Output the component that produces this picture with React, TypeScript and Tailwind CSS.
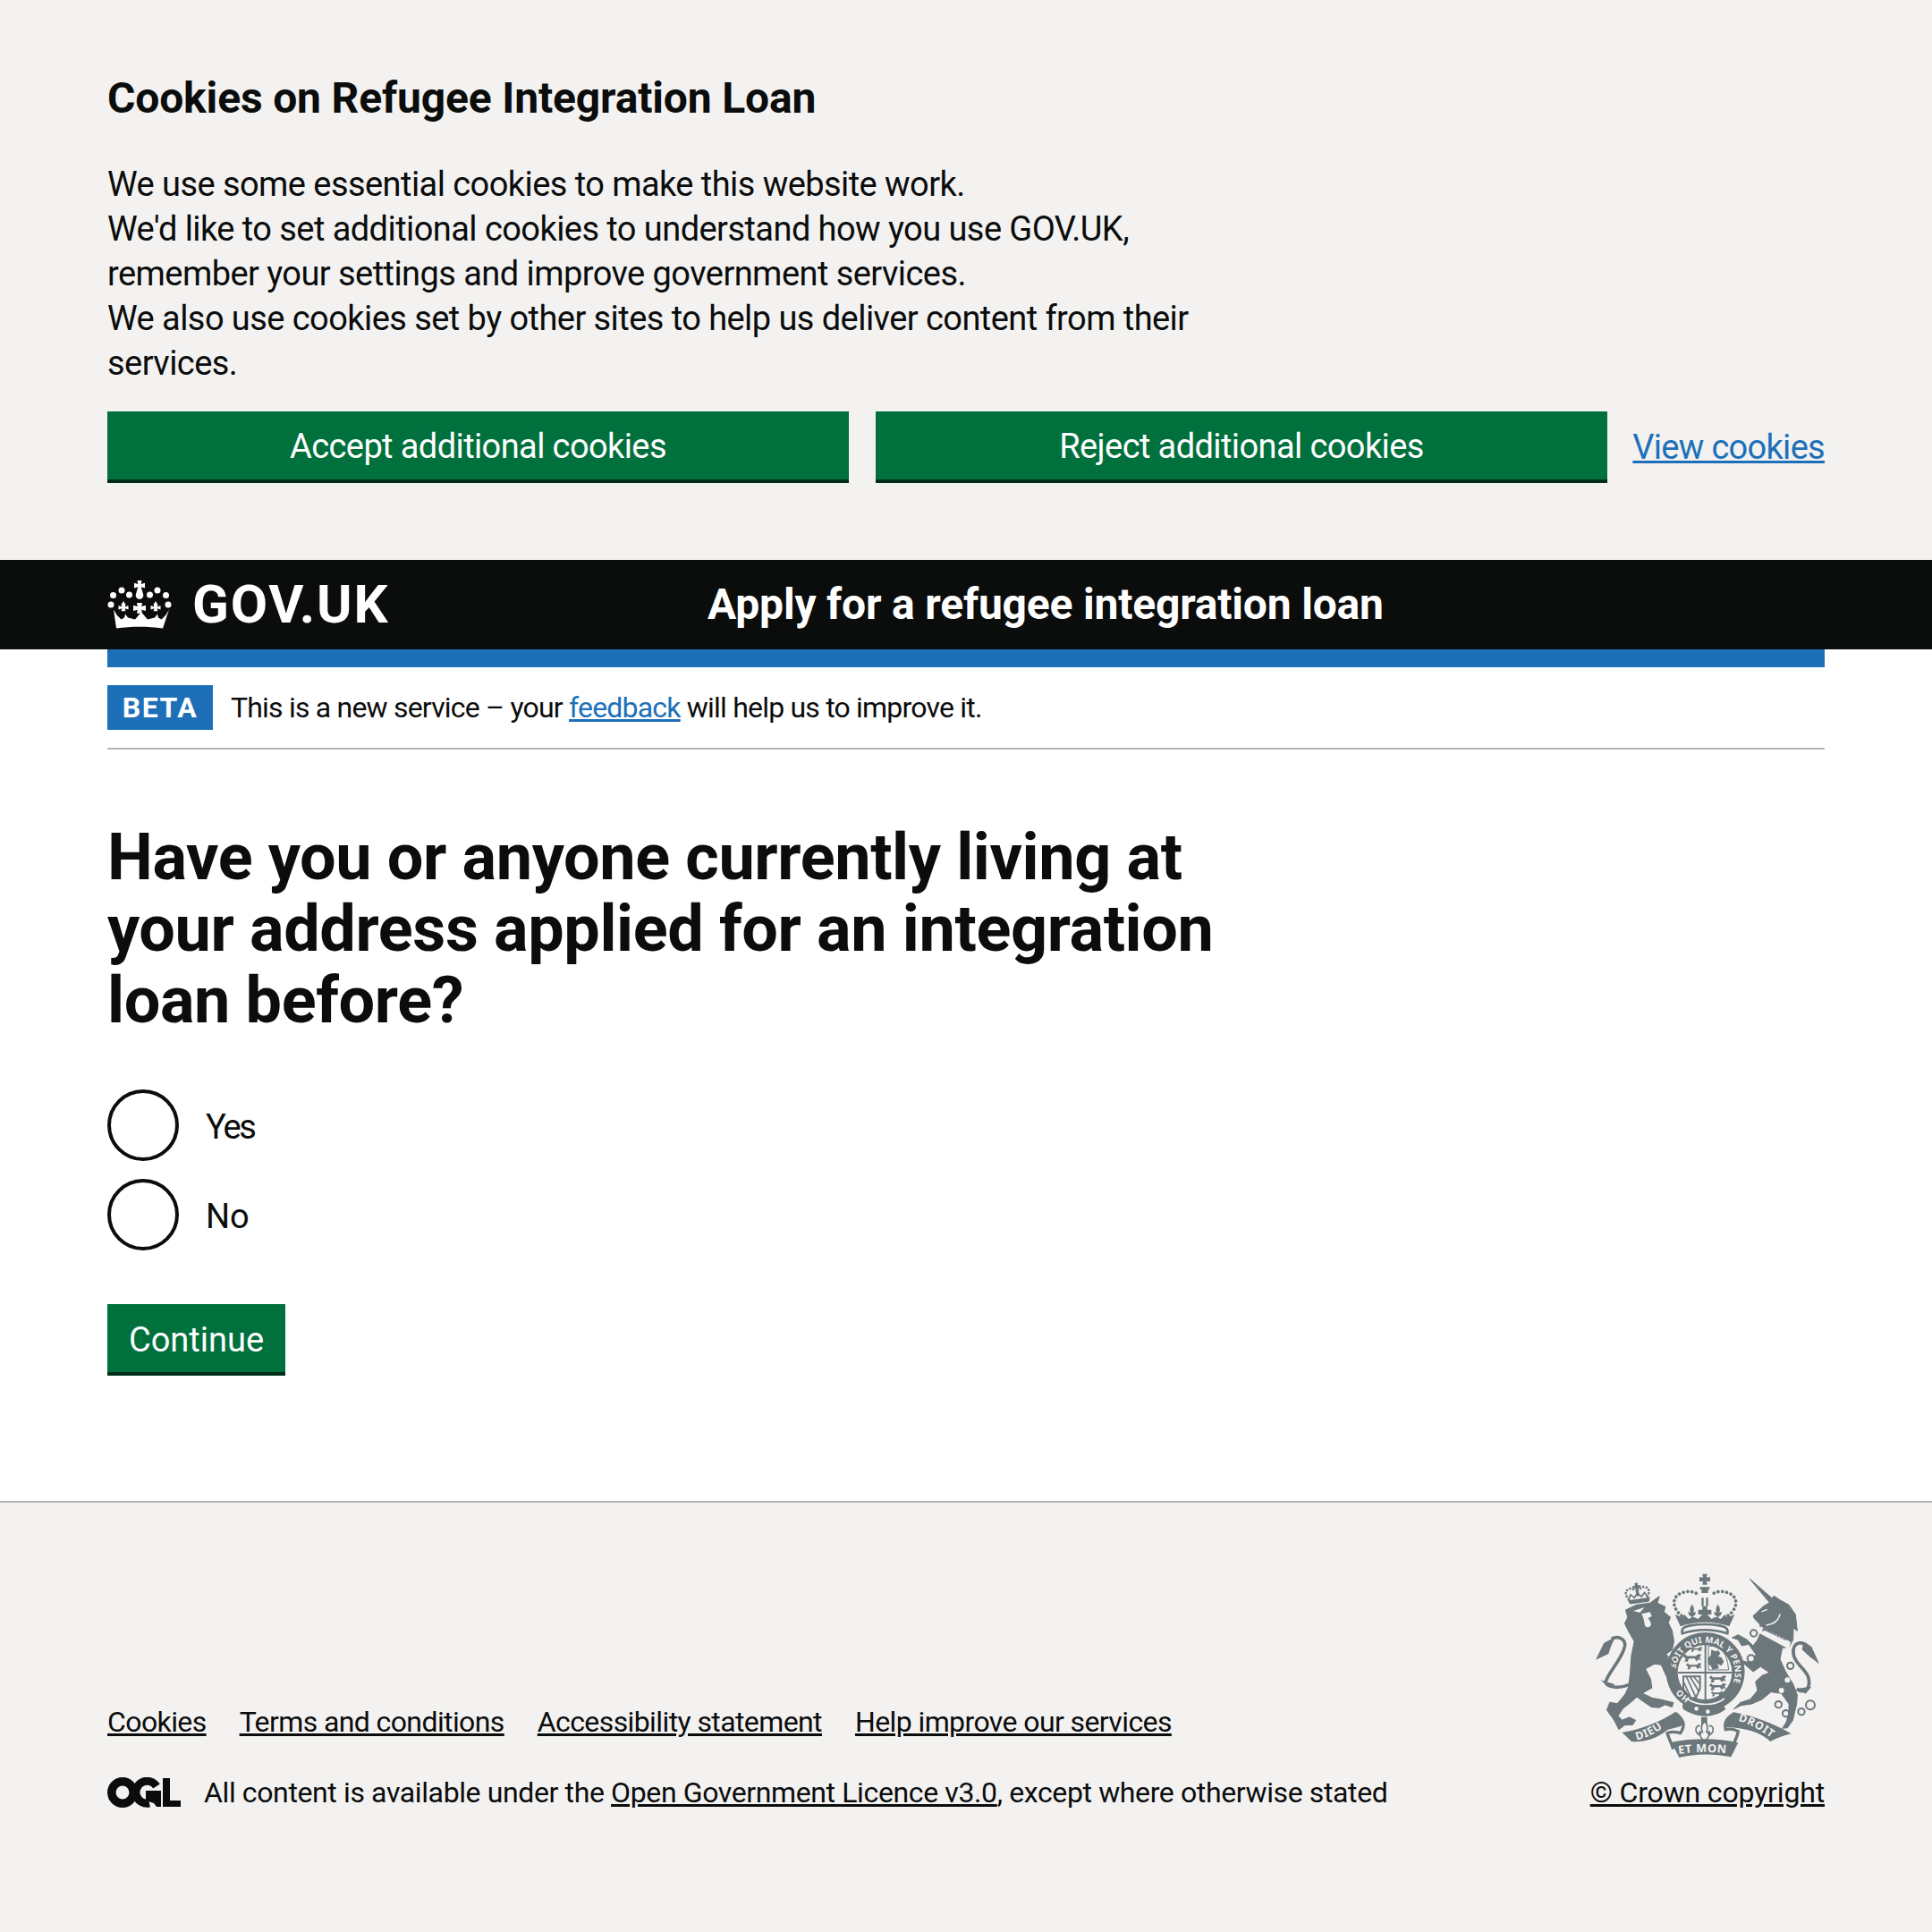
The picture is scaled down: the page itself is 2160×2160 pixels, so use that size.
import React from "react";

function Crown() {
  return (
    <svg viewBox="0 0 72 54" className="w-[72px] h-[54px] block" fill="#fff" aria-hidden="true">
      <path d="M33.500 0h5l-.8 4 4.300-1.200v5.700l-4.300-1.300 2.500 8.500a4.300 4.300 0 1 1-8.400 0l2.500-8.500-4.300 1.300V2.800l4.300 1.200z" />
      <circle cx="47.500" cy="16" r="3.500" /><circle cx="56" cy="11" r="3.500" /><circle cx="65.500" cy="16.500" r="3.500" /><circle cx="68" cy="27" r="3.500" />
      <circle cx="24.500" cy="16" r="3.500" /><circle cx="16" cy="11" r="3.500" /><circle cx="6.500" cy="16.500" r="3.500" /><circle cx="4" cy="27" r="3.500" />
      <path d="M10 53.500c17-2.400 35-2.400 52 0l7-21-3.500 6-5 5-3.500-2-1-4-3 4-8 2-6-7-2 0-6 7-8-2-3-4-1 4-3.500 2-5-5-3.500-6z" />
      <path d="M18 23l2.500 4-1 2.500 4-1.500v4.500l-4-1.200 1 3h-5l1-3-4 1.200V28l4 1.500-1-2.500z" />
      <path d="M54 23l2.500 4-1 2.500 4-1.500v4.500l-4-1.200 1 3h-5l1-3-4 1.200V28l4 1.500-1-2.500z" />
      <path d="M33 25h6l-.8 4 4.800-1.300v6.300l-4.800-1.300.8 4h-6l.8-4-4.800 1.300v-6.300l4.800 1.300z" />
    </svg>
  );
}

function Ogl() {
  return (
    <svg viewBox="0 0 82 34" className="w-[82px] h-[34px] block shrink-0" aria-hidden="true">
      <circle cx="17" cy="17" r="12.200" fill="none" stroke="#0b0c0c" strokeWidth="9.500" />
      <path d="M55 10A12.500 12.500 0 1 0 47 29" fill="none" stroke="#0b0c0c" strokeWidth="9" />
      <path d="M43 15h17v18h-5l-3-4-9-3z" fill="#0b0c0c" />
      <path d="M62 1h8v25h12v7H62z" fill="#0b0c0c" />
    </svg>
  );
}

function Crest() {
  const c = "#6b777b";
  const bg = "#f3f2f1";
  const f = "'Noto Sans', sans-serif";
  const passant = "M0 8L8 1 13 7 40 7 50 0 58 4 52 11 58 20 48 17 44 24 36 14 18 15 16 24 6 24 9 14z";
  const fleur = "M0 0c-8 12-8 20-4 28l-8-3c-2 8 4 14 8 14l4 10 4-10c4 0 10-6 8-14l-8 3c4-8 4-16-4-28z";
  return (
    <svg viewBox="0 0 780 630" className="w-[260px] h-[210px] block" aria-hidden="true">
      <defs>
        <path id="garterTop" d="M280 332A100 100 0 1 1 440 424" />
        <path id="garterLeft" d="M328 430A100 100 0 0 1 278 340" />
        <path id="dieu" d="M150 572Q215 555 266 506" />
        <path id="etmon" d="M290 618Q378 606 470 618" />
        <path id="droit" d="M490 507Q555 525 620 580" />
      </defs>

      {/* royal crown */}
      <path fill={c} d="M370 14h16l-2 12 12-2v16l-12-2 2 12h-16l2-12-12 2V24l12 2z" />
      <path fill={c} d="M362 58h32v8h-32zM367 66h22v12h-22zM367 94h7v28h-7zM382 94h7v28h-7z" />
      <path fill="none" stroke={c} strokeWidth="11" strokeLinecap="round" strokeDasharray="0.1 14.500" d="M300 154C270 130 265 95 295 80c22-10 45-10 65 6M456 154C488 130 492 95 462 80c-22-10-45-10-65 6" />
      <path fill={c} d="M296 190C345 172 412 172 460 190L478 150 452 160 445 150 432 165 415 158 400 165 378 140 356 165 340 158 323 165 310 150 303 160 278 150z" />
      <path fill={c} d="M370 122h16v12h14v16h-14v16h-16v-16h-14v-16h14z" />
      <path fill={c} transform="translate(335 116)" d={fleur} />
      <path fill={c} transform="translate(422 116)" d={fleur} />
      <path fill={bg} stroke={c} strokeWidth="8" d="M302 214C298 196 310 190 330 187 360 182 396 182 426 187 446 190 458 196 454 214 405 198 352 198 302 214z" />

      {/* garter */}
      <circle cx="380" cy="342" r="132" fill={c} />
      <circle cx="378" cy="344" r="91" fill={bg} />
      {/* shield */}
      <path stroke={c} strokeWidth="6" d="M380 250V440M288 345H470" />
      <g fill={c}>
        <path transform="translate(328 258) scale(.72)" d={passant} />
        <path transform="translate(304 282) scale(1.08)" d={passant} />
        <path transform="translate(314 312) scale(.92)" d={passant} />
        <path transform="translate(392 354) scale(1)" d={passant} />
        <path transform="translate(392 380) scale(1)" d={passant} />
        <path transform="translate(398 407) scale(.72)" d={passant} />
        <path d="M400 268l14 6 10-4 6 12-8 8 12 4 8 14-8 14-14-6 6 14-22 6-6-14-8-4-2-22 10-8z" />
      </g>
      <path fill="none" stroke={c} strokeWidth="3" d="M390 256h36q28 26 32 80h-68z" />
      <path fill={bg} stroke={c} strokeWidth="6" d="M306 358h56v40l-14 32-18 0-24-30z" />
      <path stroke={c} strokeWidth="5" fill="none" d="M316 358l32 70M328 358l30 50M306 374l24 52M340 358l20 24" />
      <text fontFamily={f} fontSize="29" fontWeight="700" fill={bg} letterSpacing="0.5">
        <textPath href="#garterTop">SOIT QUI MAL Y PENSE</textPath>
      </text>
      <text fontFamily={f} fontSize="29" fontWeight="700" fill={bg}>
        <textPath href="#garterLeft">HO</textPath>
      </text>

      {/* strap */}
      <path fill="none" stroke={bg} strokeWidth="5" d="M318 432c36 26 92 26 126 0" />
      <path fill={c} d="M308 444c-8 12-6 22 4 28 44 26 96 26 136-4l-12-22c-36 26-92 28-128-2z" />
      <circle cx="350" cy="466" r="7" fill={bg} /><circle cx="388" cy="476" r="7" fill={bg} />

      {/* lion */}
      <path fill="none" stroke={c} strokeWidth="11" d="M125 385C85 402 50 392 45 378 52 345 102 300 110 255 112 232 88 220 65 232" />
      <path fill={c} d="M78 226 40 245 12 302 55 282 64 255zM28 370l48 14-16 12z" />
      <path fill={c} stroke={c} strokeWidth="4" strokeLinejoin="round" d="M113 135 150 118 195 112 225 90 218 112 245 125 240 142 262 160 255 178 268 205 274 240 268 268 246 284 262 318 282 352 286 396 262 378 250 358 232 318 210 315 178 332 196 368 200 396 168 414 200 430 232 436 272 446 268 460 245 452 225 462 200 460 170 440 150 425 134 440 102 466 86 490 100 505 125 495 145 505 135 520 110 520 90 535 75 505 50 470 60 445 85 450 110 420 122 395 128 350 132 290 142 240 122 205 110 180 120 160z" />
      <path fill={bg} d="M138 138l38-12-16 18zM166 148l28-6 6 14-12 6 8 14a11 11 0 1 1-20 4l-4-18z" />
      <path fill="none" stroke={bg} strokeWidth="3" d="M226 262l44 46" />
      <path fill="none" stroke={c} strokeWidth="5" d="M222 258l50 52" />
      <g transform="rotate(-8 152 78)">
        <path fill={c} d="M116 98h76l-6 14h-64z" />
        <path fill={c} d="M147 44h10v9h9v8h-9v28h-10V61h-9v-8h9z" />
        <path fill="none" stroke={c} strokeWidth="8" strokeLinecap="round" strokeDasharray="0.1 11" d="M120 94c-12-16-8-30 8-34 8 0 14 4 18 10M184 94c12-16 8-30-8-34-8 0-14 4-18 10" />
        <path fill="none" stroke={c} strokeWidth="5" d="M120 96l8-16 12 12 12-14 12 14 12-12 8 16" />
      </g>

      {/* unicorn */}
      <g transform="translate(390 0)">
        <path fill="none" stroke={c} strokeWidth="11" d="M296 400C325 418 345 395 335 360 325 330 280 310 285 268 290 240 318 240 335 258" />
        <path fill={c} d="M318 243 346 258 372 316 340 292 314 268zM298 398l48-6-20 24z" />
        <path fill={c} stroke={c} strokeWidth="3" strokeLinejoin="round" d="M138 30 213 95 220 88 238 100 270 118 292 150 298 205 285 195 284 235 270 260 248 262 240 300 258 340 285 385 298 420 296 450 283 505 265 530 248 532 262 510 270 480 270 450 245 415 210 410 180 435 145 450 110 455 85 467 108 445 140 435 165 405 158 375 180 355 205 345 175 325 150 342 125 320 105 302 130 310 160 285 135 250 112 255 100 235 80 228 100 218 130 235 150 255 165 235 178 205 172 182 155 165 150 155 185 122 205 110z" />
        <path fill="none" stroke={bg} strokeWidth="4" strokeLinecap="round" d="M240 150c-4 20-20 32-45 36M180 140l16-6" />
        <path fill={bg} d="M176 190 276 242 270 266 170 212z" />
        <path fill={c} d="M180 206l4-16 5 10 5-10 4 14 6-8 4 14 6-8 4 14 6-8 4 14 6-8 4 14 6-8 4 14 6-8 6 12-70-34z" />
        <g fill="none" stroke={c} strokeWidth="6">
          <circle cx="152" cy="213" r="11" fill={bg} /><circle cx="143" cy="298" r="12" fill={bg} /><circle cx="275" cy="322" r="11" fill={bg} />
          <circle cx="235" cy="452" r="11" /><circle cx="260" cy="482" r="11" /><circle cx="312" cy="476" r="11" /><circle cx="342" cy="454" r="15" />
        </g>
        <circle cx="265" cy="370" r="9" fill={bg} /><circle cx="245" cy="405" r="9" fill={bg} />
      </g>

      {/* fleur */}
      <path fill={c} d="M366 494h20v30h-20z" />
      <path fill={bg} stroke={c} strokeWidth="5" d="M377 508c-12 13-12 26-7 36h-10c0 12 8 26 17 30 9-4 17-18 17-30h-10c5-10 5-23-7-36zM362 524c-16-5-20 20-2 30l6-6M392 524c16-5 20 20 2 30l-6-6" />

      {/* ribbon */}
      <path fill="none" stroke={c} strokeWidth="10" d="M282 482c26 22 32 40 14 66-14-4-30-6-44 0 6 20 16 38 20 54M478 482c-26 12-36 32-30 54 16-4 28-2 42 6-4 22-14 38-22 56" />
      <path fill={c} d="M100 546C160 536 230 510 280 476 296 490 308 506 306 520 290 530 272 530 252 538 210 570 170 580 132 576 122 566 112 556 100 546z" />
      <path fill={c} d="M266 578C340 564 420 564 490 580L466 628C410 616 345 616 292 630z" />
      <path fill={c} d="M474 478C545 490 615 520 668 550 640 556 620 565 598 576 570 548 520 530 450 528 448 510 460 492 474 478z" />
      <text fontFamily={f} fontSize="37" fontWeight="700" fill={bg} letterSpacing="2">
        <textPath href="#dieu">DIEU</textPath>
      </text>
      <text fontFamily={f} fontSize="38" fontWeight="700" fill={bg} letterSpacing="2">
        <textPath href="#etmon">ET MON</textPath>
      </text>
      <text fontFamily={f} fontSize="37" fontWeight="700" fill={bg} letterSpacing="2">
        <textPath href="#droit">DROIT</textPath>
      </text>
    </svg>
  );
}

function Radio({ label, cls }: { label: string; cls: string }) {
  return (
    <label className="flex items-center">
      <span className="w-[80px] h-[80px] rounded-full border-[4px] border-[#0b0c0c] bg-white shrink-0" />
      <span className={`pl-[30px] pt-[4px] text-[#0b0c0c] ${cls}`}>{label}</span>
    </label>
  );
}

export default function App() {
  return (
    <div
      className="w-[2160px] h-[2160px] flex flex-col bg-white text-[#0b0c0c] text-[38px] leading-[50px]"
      style={{ fontFamily: "'Roboto', sans-serif" }}
    >
      <section className="bg-[#f3f2f1] h-[626px] shrink-0 px-[120px] pt-[80px]">
        <h2 className="text-[48px] leading-[60px] font-bold tracking-[-0.16px]">Cookies on Refugee Integration Loan</h2>
        <p className="mt-[41px] whitespace-nowrap tracking-[-0.56px]">
          We use some essential cookies to make this website work.<br />
          We'd like to set additional cookies to understand how you use GOV.UK,<br />
          remember your settings and improve government services.<br />
          We also use cookies set by other sites to help us deliver content from their<br />
          services.
        </p>
        <div className="flex items-center mt-[29px]">
          <button className="w-[829px] h-[80px] pt-[2px] bg-[#00703c] border-b-[4px] border-[#002d18] text-white tracking-[-0.6px]">Accept additional cookies</button>
          <button className="w-[818px] h-[80px] pt-[2px] ml-[30px] bg-[#00703c] border-b-[4px] border-[#002d18] text-white tracking-[-0.6px]">Reject additional cookies</button>
          <a className="ml-auto text-[#1d70b8] underline tracking-[-0.7px]">View cookies</a>
        </div>
      </section>

      <header className="bg-[#0b0c0c] h-[100px] shrink-0 px-[120px] flex items-center text-white">
        <Crown />
        <span className="ml-[23px] w-[576px] text-[60px] font-bold leading-none tracking-[1.8px]">GOV.UK</span>
        <span className="text-[48px] font-bold tracking-[-0.2px]">Apply for a refugee integration loan</span>
      </header>

      <main className="flex-1 px-[120px]">
        <div className="h-[20px] bg-[#1d70b8]" />
        <div className="flex items-center h-[92px] border-b-[2px] border-[#b1b4b6] text-[32px]">
          <strong className="bg-[#1d70b8] text-white h-[50px] w-[118px] flex items-center justify-center text-[32px] font-bold tracking-[1.5px] leading-none">BETA</strong>
          <span className="ml-[20px] tracking-[-0.8px]">
            This is a new service – your <a className="text-[#1d70b8] underline">feedback</a> will help us to improve it.
          </span>
        </div>
        <h1 className="mt-[81px] text-[72px] leading-[80px] font-bold whitespace-nowrap tracking-[-0.38px]">
          Have you or anyone currently living at<br />
          your address applied for an integration<br />
          loan before?
        </h1>
        <div className="mt-[59px] flex flex-col gap-[20px]">
          <Radio label="Yes" cls="tracking-[-2.2px]" />
          <Radio label="No" cls="tracking-[0px]" />
        </div>
        <button className="mt-[60px] block w-[199px] h-[80px] pt-[4px] bg-[#00703c] border-b-[4px] border-[#002d18] text-white">Continue</button>
      </main>

      <footer className="bg-[#f3f2f1] border-t-[2px] border-[#b1b4b6] h-[482px] shrink-0 px-[120px] flex items-end pb-[131px] text-[32px]">
        <div className="flex-1">
          <ul className="flex gap-[37px] underline tracking-[-0.6px]">
            <li>Cookies</li>
            <li>Terms and conditions</li>
            <li>Accessibility statement</li>
            <li>Help improve our services</li>
          </ul>
          <div className="flex items-center mt-[29px]">
            <Ogl />
            <span className="ml-[26px] tracking-[-0.38px]">All content is available under the <a className="underline">Open Government Licence v3.0</a>, except where otherwise stated</span>
          </div>
        </div>
        <div className="flex flex-col items-end">
          <Crest />
          <a className="underline mt-[14px] tracking-[-0.16px]">© Crown copyright</a>
        </div>
      </footer>
    </div>
  );
}
